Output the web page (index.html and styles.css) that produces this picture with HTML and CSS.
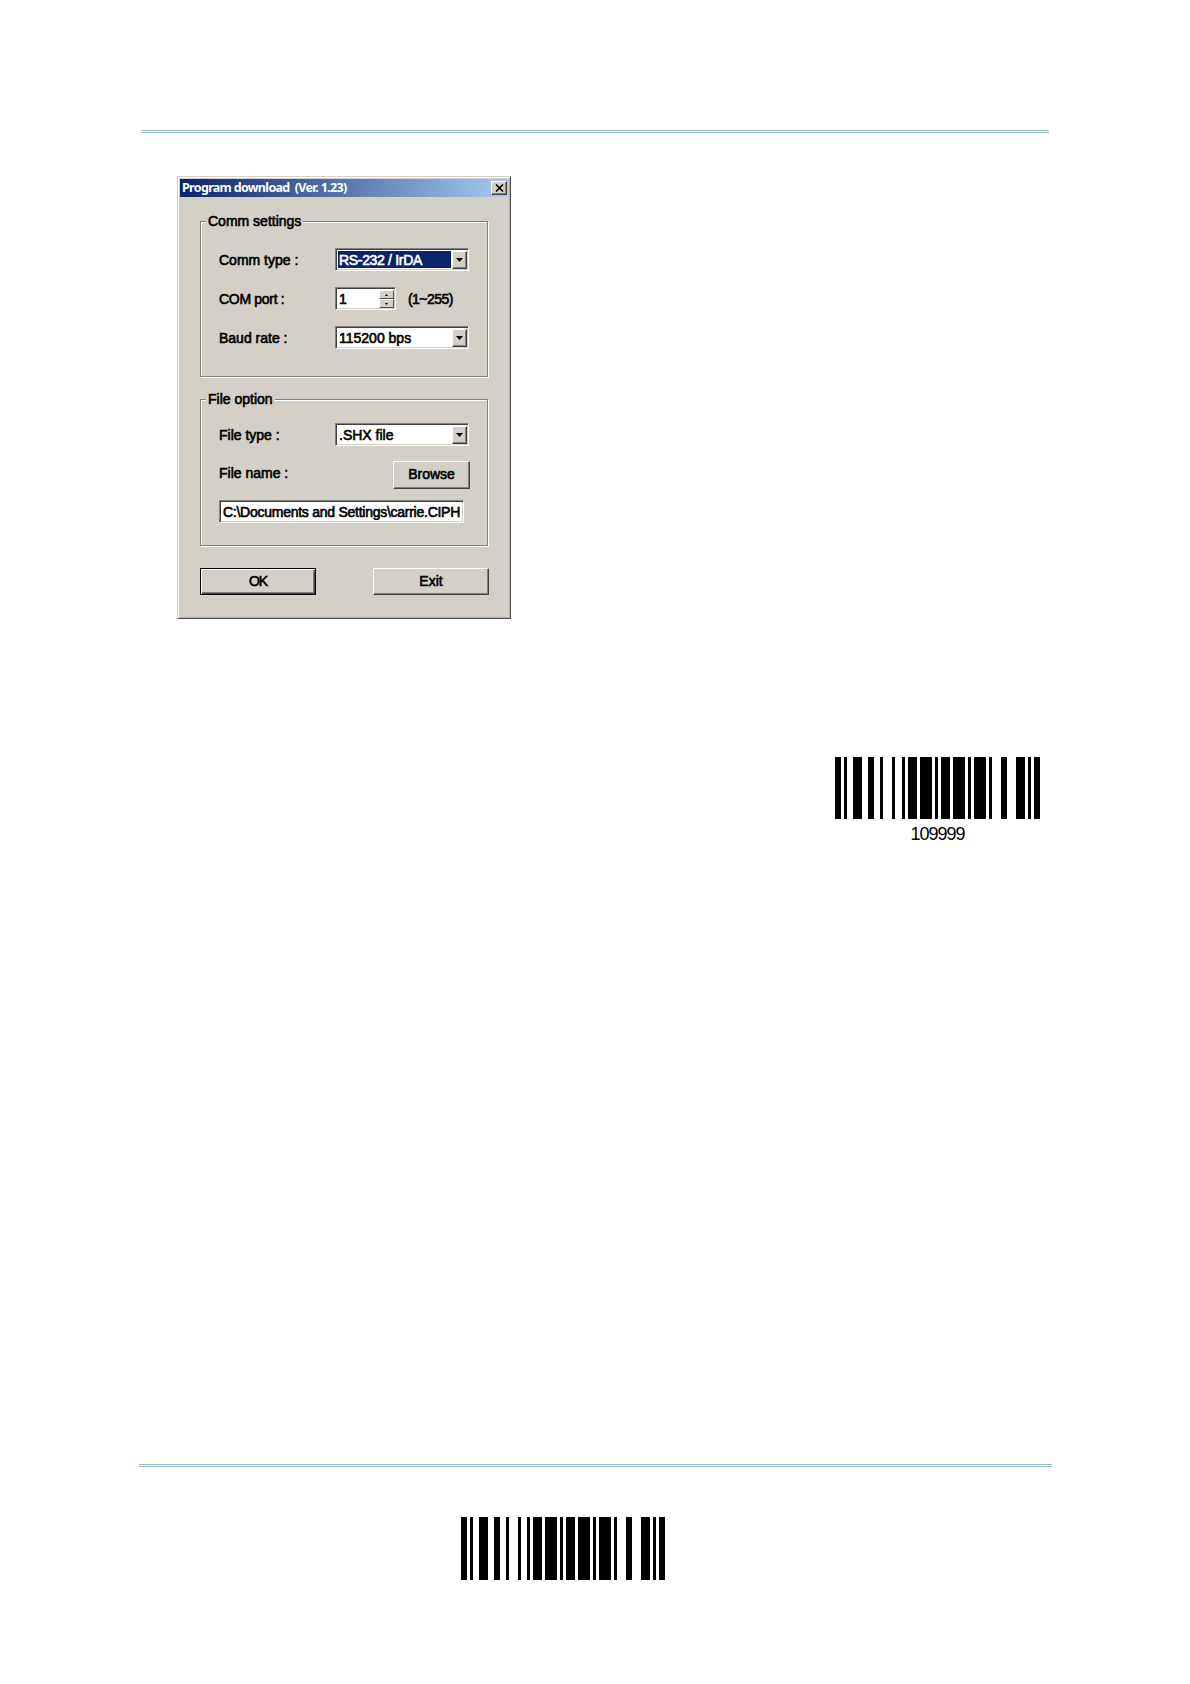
FILE: index.html
```html
<!DOCTYPE html>
<html lang="en">
<head>
<meta charset="utf-8">
<title>Program download</title>
<link rel="stylesheet" href="styles.css">
</head>
<body>
<main class="page">
  <div class="rule rule-top"></div>
  <section class="dialog">
    <header class="titlebar">
      <span class="title">Program download&nbsp; (Ver. 1.23)</span>
      <button class="close" aria-label="Close"><svg width="9" height="8" viewBox="0 0 9 8"><path d="M1 .5 8 7.5M8 .5 1 7.5" stroke="#000" stroke-width="1.6"/></svg></button>
    </header>
    <div class="group comm">
      <div class="legend">Comm settings</div>
      <div class="row">
        <span class="label">Comm type :</span>
        <div class="field combo"><span class="value selected">RS-232 / IrDA</span><span class="drop"><svg width="7" height="4"><path d="M0 0h7L3.5 4z"/></svg></span></div>
      </div>
      <div class="row">
        <span class="label tight">COM port :</span>
        <div class="field spin"><span class="value">1</span><span class="steps"><i><svg width="3" height="2"><path d="M1.500 0 3 2H0z"/></svg></i><i><svg width="3" height="2"><path d="M0 0h3L1.500 2z"/></svg></i></span></div>
        <span class="range">(1~255)</span>
      </div>
      <div class="row">
        <span class="label">Baud rate :</span>
        <div class="field combo"><span class="value">115200 bps</span><span class="drop"><svg width="7" height="4"><path d="M0 0h7L3.5 4z"/></svg></span></div>
      </div>
    </div>
    <div class="group file">
      <div class="legend">File option</div>
      <div class="row">
        <span class="label">File type :</span>
        <div class="field combo"><span class="value">.SHX file</span><span class="drop"><svg width="7" height="4"><path d="M0 0h7L3.5 4z"/></svg></span></div>
      </div>
      <div class="row name-row">
        <span class="label">File name :</span>
        <button class="btn browse">Browse</button>
      </div>
      <div class="field path"><span class="value">C:\Documents and Settings\carrie.CIPH</span></div>
    </div>
    <footer class="actions">
      <button class="btn ok">OK</button>
      <button class="btn exit">Exit</button>
    </footer>
  </section>
  <figure class="barcode upper">
    <svg width="205" height="62" viewBox="10 0 205 62" shape-rendering="crispEdges"><path d="M10 0h6v62h-6zM19 0h3v62h-3zM28 0h9v62h-9zM43 0h6v62h-6zM55 0h3v62h-3zM67 0h3v62h-3zM77 0h3v62h-3zM83 0h9v62h-9zM95 0h12v62h-12zM110 0h3v62h-3zM116 0h9v62h-9zM128 0h12v62h-12zM143 0h3v62h-3zM149 0h12v62h-12zM164 0h3v62h-3zM176 0h6v62h-6zM191 0h9v62h-9zM203 0h3v62h-3zM209 0h6v62h-6z"/></svg>
    <figcaption>109999</figcaption>
  </figure>
  <div class="rule rule-bottom"></div>
  <figure class="barcode lower">
    <svg width="204" height="63" viewBox="11 0 204 63" shape-rendering="crispEdges"><path d="M11 0h6v63h-6zM20 0h3v63h-3zM29 0h9v63h-9zM44 0h6v63h-6zM56 0h3v63h-3zM68 0h3v63h-3zM77 0h3v63h-3zM83 0h9v63h-9zM95 0h12v63h-12zM110 0h3v63h-3zM116 0h9v63h-9zM128 0h12v63h-12zM143 0h3v63h-3zM149 0h12v63h-12zM164 0h3v63h-3zM176 0h6v63h-6zM191 0h9v63h-9zM203 0h3v63h-3zM209 0h6v63h-6z"/></svg>
  </figure>
</main>
</body>
</html>
```
FILE: styles.css
```css
* { box-sizing: border-box; }
body { margin: 0; background: #fff; color: #000; }
svg { display: block; }
button { padding: 0; border: 0; font: inherit; color: inherit; letter-spacing: inherit; }

.page {
  display: flex;
  flex-direction: column;
  align-items: flex-start;
  width: 1190px;
  height: 1684px;
  padding-top: 130px;
}

.rule { height: 3px; border: solid #9db8d6; border-width: 1px 0; }
.rule-top { width: 907px; margin-left: 142px; }
.rule-bottom { width: 913px; margin: 622px 0 0 139px; border-color: #9ab8c6; }

.dialog {
  width: 334px;
  height: 443px;
  margin: 43px 0 0 177px;
  padding: 1px;
  background: #d4d0c8;
  border: 1px solid;
  border-color: #d4d0c8 #505050 #505050 #d4d0c8;
  box-shadow: inset 1px 1px #fff, inset -1px -1px #b0aca4;
  font: 14px/18px "Liberation Sans", Arial, sans-serif;
  white-space: nowrap;
  -webkit-text-stroke: .6px currentColor;
}

.titlebar {
  display: flex;
  align-items: center;
  justify-content: space-between;
  height: 18px;
  margin: 1px 1px 0;
  padding: 0 1px 0 2px;
  background: linear-gradient(90deg, #0a246a, #a6caf0);
  color: #fff;
}
.title {
  font: bold 12.5px/18px "Noto Sans", sans-serif;
  letter-spacing: -.67px;
  -webkit-text-stroke: 0;
}
.close {
  display: grid;
  place-items: center;
  width: 16px;
  height: 14px;
  background: #d4d0c8;
  border: 1px solid;
  border-color: #fff #404040 #404040 #fff;
  box-shadow: inset -1px -1px #808080;
}

.group {
  width: 288px;
  margin-left: 21px;
  border: 1px solid #808080;
  box-shadow: 1px 1px #fff, inset 1px 1px #fff;
}
.comm { height: 156px; margin-top: 24px; }
.file { height: 147px; margin-top: 22px; }
.legend {
  width: max-content;
  height: 18px;
  margin: -10px 0 0 5px;
  padding: 0 2px;
  background: #d4d0c8;
}

.row { display: flex; align-items: center; height: 23px; margin: 16px 0 0 18px; }
.comm .legend + .row { margin-top: 18px; }
.file .legend + .row { margin-top: 15px; }
.label { width: 116px; }
.tight { letter-spacing: -.3px; }

.field {
  display: flex;
  height: 23px;
  background: #fff;
  border: 1px solid;
  border-color: #808080 #fff #fff #808080;
  box-shadow: inset 1px 1px #404040, inset -1px -1px #d4d0c8;
  padding: 2px;
}
.value { flex: 1; padding-left: 1px; line-height: 18px; overflow: hidden; }
.combo { width: 134px; padding-right: 1px; }
.selected { margin-right: 1px; background: #0a246a; color: #fff; letter-spacing: -.32px; }
.drop {
  display: grid;
  place-items: center;
  width: 15px;
  margin-bottom: -1px;
  background: #d4d0c8;
  border: 1px solid;
  border-color: #fff #404040 #404040 #fff;
  box-shadow: inset -1px -1px #808080;
}
.spin { width: 61px; padding: 2px 1px 1px 2px; }
.steps { display: grid; grid-template-rows: 1fr 1fr; width: 15px; }
.steps i {
  display: grid;
  place-items: center;
  background: #d4d0c8;
  border: 1px solid;
  border-color: #fff #505050 #505050 #fff;
}
.range { margin-left: 12px; letter-spacing: -.55px; }
.name-row { height: 28px; margin-top: 15px; }
.name-row .label { width: 174px; margin-top: -4px; }
.path { width: 245px; margin: 11px 0 0 18px; letter-spacing: -.26px; }

.btn {
  padding-bottom: 2px;
  background: #d4d0c8;
  border: 1px solid;
  border-color: #fff #404040 #404040 #fff;
  box-shadow: inset -1px -1px #808080;
}
.browse { width: 77px; height: 28px; }
.actions { display: flex; justify-content: space-between; width: 289px; margin: 22px 0 0 21px; }
.ok, .exit { width: 116px; height: 27px; }
.ok { border-color: #000; box-shadow: inset 1px 1px #fff, inset -1px -1px #404040, inset -2px -2px #808080; letter-spacing: -1px; }

.barcode { margin: 0; }
.upper { width: 205px; height: 85px; margin: 138px 0 0 835px; }
.lower { margin: 50px 0 0 461px; }
figcaption {
  margin-top: 5px;
  font: 18px/21px "Liberation Sans", Arial, sans-serif;
  letter-spacing: -1px;
  text-align: center;
}
```
